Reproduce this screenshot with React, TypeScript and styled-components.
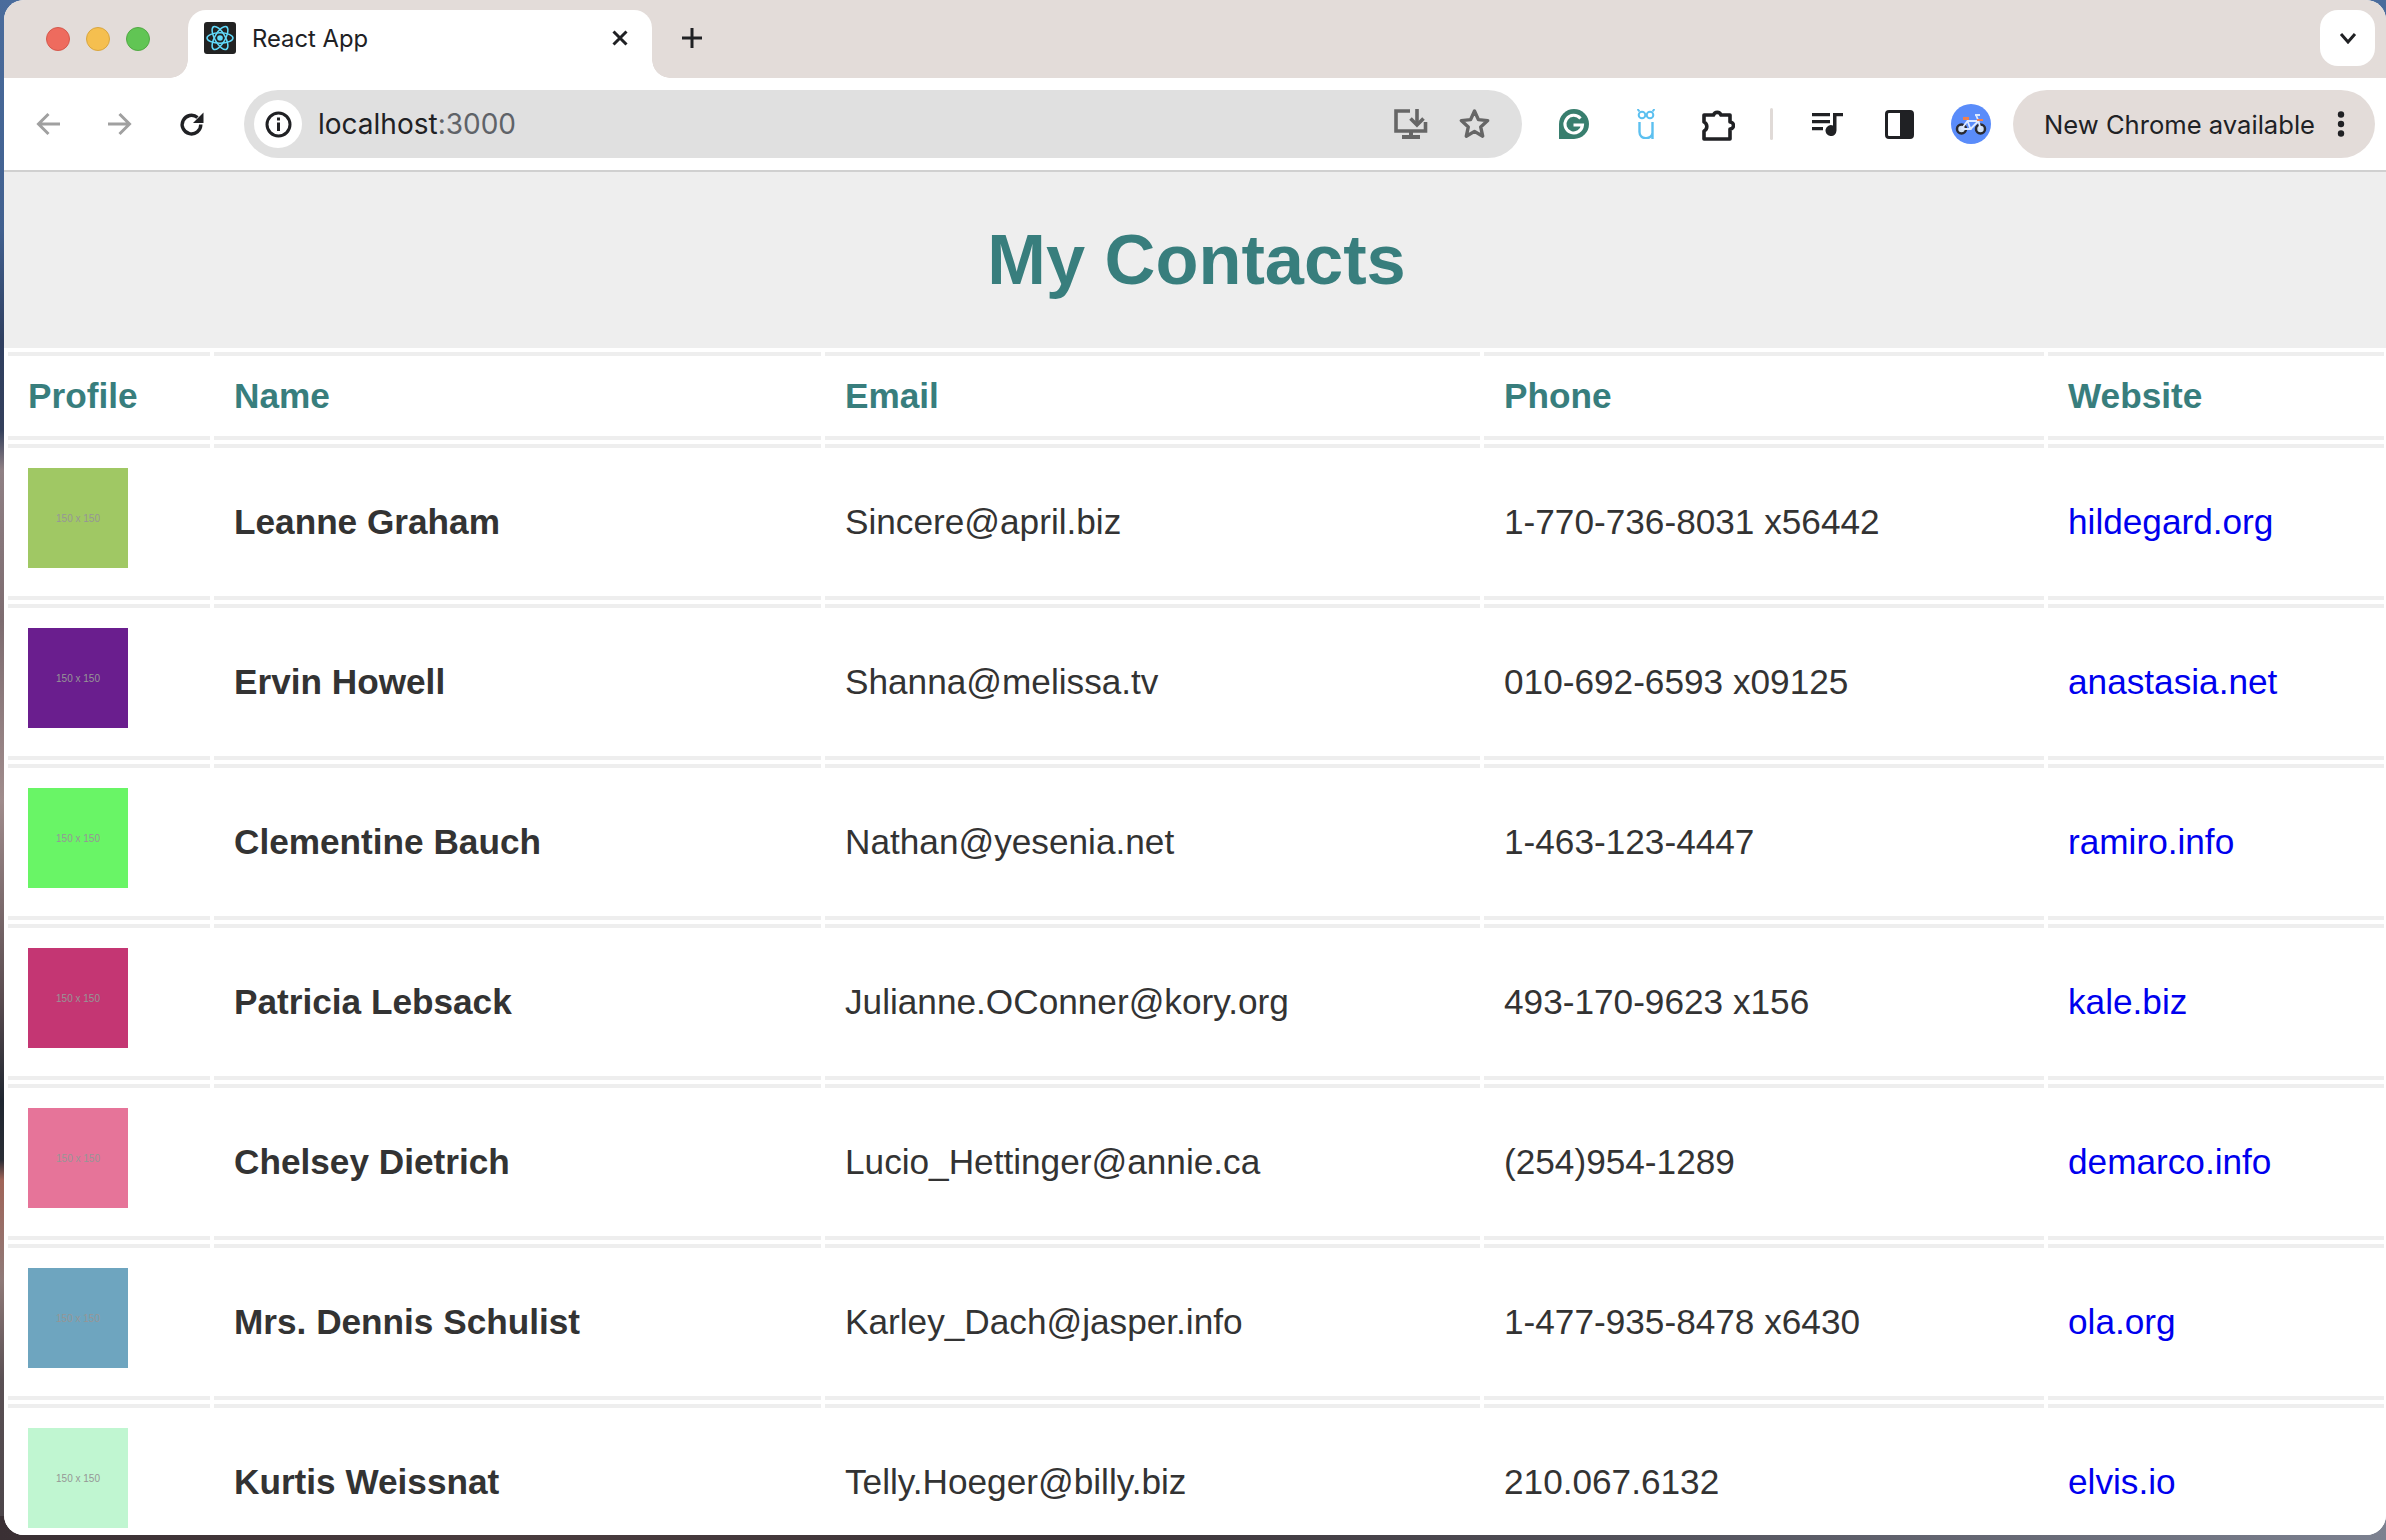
import React from "react";
import styled, { createGlobalStyle } from "styled-components";

const Global = createGlobalStyle`
  html, body { margin: 0; padding: 0; width: 2386px; height: 1540px; overflow: hidden; background: #3c4250; }
`;

const Desktop = styled.div`
  width: 2386px;
  height: 1540px;
  padding: 0 0 5px 4px;
  box-sizing: border-box;
  overflow: hidden;
  background:
    linear-gradient(90deg, #3a3034 0, #4a3c3e 500px, #3c3438 1100px, #55555f 1700px, #7c8190 2386px) bottom / 100% 24px no-repeat,
    linear-gradient(180deg, #4a6c9c 0, #41608f 230px, #2f3f60 340px, #34405c 430px, #8f8084 470px, #7d6c70 620px, #a08c8c 800px, #5a4c50 1000px, #1f2630 1100px, #2a2d35 1160px, #a06458 1180px, #8f7a78 1280px, #5a5054 1380px, #4a4448 1540px);
`;

const Window = styled.div`
  width: 100%;
  height: 100%;
  display: flex;
  flex-direction: column;
  background: #fff;
  border-radius: 20px;
  overflow: hidden;
`;

const TabStrip = styled.div`
  height: 78px;
  flex: none;
  display: flex;
  background: #e3dcd9;
  padding: 10px 11px 0 42px;
  box-sizing: border-box;
`;

const Lights = styled.div`
  display: flex;
  align-items: center;
  gap: 16px;
  height: 58px;
  margin-right: 38px;
`;

const Light = styled.span<{ $c: string; $b: string }>`
  width: 24px;
  height: 24px;
  border-radius: 50%;
  box-sizing: border-box;
  background: ${(p) => p.$c};
  border: 1px solid ${(p) => p.$b};
`;

const Tab = styled.div`
  position: relative;
  width: 464px;
  height: 68px;
  flex: none;
  padding: 0 24px 12px 16px;
  display: flex;
  align-items: center;
  gap: 16px;
  box-sizing: border-box;
  background: #fff;
  border-radius: 18px 18px 0 0;
  font: 400 23.8px Inter, sans-serif;
  color: #202124;
  &::before, &::after {
    content: "";
    position: absolute;
    bottom: 0;
    width: 18px;
    height: 18px;
  }
  &::before { left: -18px; background: radial-gradient(circle at 0 0, transparent 17.5px, #fff 18px); }
  &::after { right: -18px; background: radial-gradient(circle at 100% 0, transparent 17.5px, #fff 18px); }
`;

const TabTitle = styled.span`
  flex: 1;
`;

const PlusButton = styled.div`
  margin: 18px 0 0 30px;
  width: 20px;
  height: 20px;
  display: flex;
  color: #202124;
`;

const StripSpacer = styled.div`
  flex: 1;
`;

const ChevronButton = styled.div`
  width: 55px;
  height: 56px;
  background: #fff;
  border-radius: 18px;
  display: flex;
  align-items: center;
  justify-content: center;
  color: #202124;
`;

const Toolbar = styled.div`
  height: 94px;
  flex: none;
  display: flex;
  align-items: center;
  box-sizing: border-box;
  padding: 0 11px 0 0;
  background: #fff;
  border-bottom: 2px solid #d0d0d0;
`;

const NavButtons = styled.div`
  display: flex;
  align-items: center;
  gap: 46px;
  padding-left: 31px;
  margin-right: 39px;
`;

const NavIcon = styled.div<{ $on?: boolean }>`
  width: 26px;
  height: 26px;
  display: flex;
  color: ${(p) => (p.$on ? "#202124" : "#a0a0a0")};
`;

const Omnibox = styled.div`
  width: 1278px;
  height: 68px;
  flex: none;
  display: flex;
  align-items: center;
  box-sizing: border-box;
  padding: 0 31px 0 10px;
  background: #e0e0e0;
  border-radius: 34px;
  font: 400 28px Inter, sans-serif;
  color: #202124;
`;

const InfoChip = styled.div`
  width: 48px;
  height: 48px;
  border-radius: 50%;
  background: #fff;
  display: flex;
  align-items: center;
  justify-content: center;
  margin-right: 16px;
`;

const Port = styled.span`
  color: #5f6368;
`;

const Url = styled.div`
  flex: 1;
  white-space: nowrap;
`;

const OmniIcons = styled.div`
  display: flex;
  align-items: center;
  gap: 30px;
  color: #666;
`;

const Extensions = styled.div`
  display: flex;
  align-items: center;
  margin-left: 16px;
`;

const Ext = styled.div`
  width: 72px;
  height: 40px;
  display: flex;
  align-items: center;
  justify-content: center;
`;

const Separator = styled.div`
  width: 3px;
  height: 32px;
  background: #e0dad7;
  border-radius: 2px;
  margin: 0 18px 0 16px;
`;

const UpdatePill = styled.div`
  margin-left: 6px;
  width: 362px;
  height: 68px;
  box-sizing: border-box;
  display: flex;
  align-items: center;
  justify-content: space-between;
  padding: 0 30px 0 31px;
  background: #e3dcd9;
  border-radius: 34px;
  font: 400 25.6px Inter, sans-serif;
  color: #202124;
`;

const Page = styled.div`
  flex: 1;
  min-height: 0;
  overflow: hidden;
  background: #fff;
  font-family: "Liberation Sans", Arial, sans-serif;
`;

const Header = styled.header`
  height: 176px;
  box-sizing: border-box;
  padding: 0 0 2px 3px;
  background: #eee;
  display: flex;
  align-items: center;
  justify-content: center;
`;

const Title = styled.h1`
  margin: 0;
  font-size: 70.4px;
  font-weight: 700;
  color: #387e7d;
`;

const Table = styled.table`
  width: 2384px;
  table-layout: fixed;
  border-collapse: separate;
  border-spacing: 4px;
`;

const Th = styled.th`
  height: 80px;
  padding: 0 20px;
  text-align: left;
  font-size: 35.2px;
  font-weight: 700;
  color: #387e7d;
  border-top: 4px solid #eee;
  border-bottom: 4px solid #eee;
`;

const Td = styled.td`
  padding: 20px;
  height: 156px;
  box-sizing: border-box;
  font-size: 35.2px;
  color: #333;
  border-top: 4px solid #eee;
  border-bottom: 4px solid #eee;
  vertical-align: middle;
`;

const NameCell = styled(Td)`
  font-weight: 700;
`;

const PhotoCell = styled(Td)`
  vertical-align: top;
`;

const Photo = styled.div<{ $bg: string }>`
  width: 100px;
  height: 100px;
  display: flex;
  align-items: center;
  justify-content: center;
  background: ${(p) => p.$bg};
  color: #969696;
  font-size: 10px;
`;

const Site = styled.a`
  color: #0000ee;
  text-decoration: none;
`;

const contacts = [
  { name: "Leanne Graham", email: "Sincere@april.biz", phone: "1-770-736-8031 x56442", site: "hildegard.org", bg: "#a0c864" },
  { name: "Ervin Howell", email: "Shanna@melissa.tv", phone: "010-692-6593 x09125", site: "anastasia.net", bg: "#6a1e8e" },
  { name: "Clementine Bauch", email: "Nathan@yesenia.net", phone: "1-463-123-4447", site: "ramiro.info", bg: "#69f566" },
  { name: "Patricia Lebsack", email: "Julianne.OConner@kory.org", phone: "493-170-9623 x156", site: "kale.biz", bg: "#c43673" },
  { name: "Chelsey Dietrich", email: "Lucio_Hettinger@annie.ca", phone: "(254)954-1289", site: "demarco.info", bg: "#e67499" },
  { name: "Mrs. Dennis Schulist", email: "Karley_Dach@jasper.info", phone: "1-477-935-8478 x6430", site: "ola.org", bg: "#6ea5bf" },
  { name: "Kurtis Weissnat", email: "Telly.Hoeger@billy.biz", phone: "210.067.6132", site: "elvis.io", bg: "#c0f6d1" },
];

const ReactLogo = () => (
  <svg width="32" height="32" viewBox="0 0 32 32">
    <rect width="32" height="32" rx="3" fill="#222" />
    <g fill="none" stroke="#61dafb" strokeWidth="1.5">
      <ellipse cx="16" cy="16" rx="13" ry="5.2" />
      <ellipse cx="16" cy="16" rx="13" ry="5.2" transform="rotate(60 16 16)" />
      <ellipse cx="16" cy="16" rx="13" ry="5.2" transform="rotate(120 16 16)" />
    </g>
    <circle cx="16" cy="16" r="2.8" fill="#61dafb" />
  </svg>
);

const Glyph = ({ children, size = 24, vb = 24, sw = 2.4 }: { children: React.ReactNode; size?: number; vb?: number; sw?: number }) => (
  <svg width={size} height={size} viewBox={`0 0 ${vb} ${vb}`} fill="none" stroke="currentColor" strokeWidth={sw}>
    {children}
  </svg>
);

export default function App() {
  return (
    <Desktop>
      <Global />
      <Window>
        <TabStrip>
          <Lights>
            <Light $c="#ee6b5e" $b="#d5584c" />
            <Light $c="#f5bf4f" $b="#d9a63f" />
            <Light $c="#61c554" $b="#52a944" />
          </Lights>
          <Tab>
            <ReactLogo />
            <TabTitle>React App</TabTitle>
            <Glyph size={16} vb={16} sw={3}><path d="M1.5 1.5l13 13M14.5 1.5l-13 13" /></Glyph>
          </Tab>
          <PlusButton>
            <Glyph size={20} vb={20} sw={3}><path d="M10 0v20M0 10h20" /></Glyph>
          </PlusButton>
          <StripSpacer />
          <ChevronButton>
            <Glyph size={18} vb={18} sw={3}><path d="M2 5l7 8 7-8" /></Glyph>
          </ChevronButton>
        </TabStrip>
        <Toolbar>
          <NavButtons>
            <NavIcon>
              <Glyph size={26} vb={26} sw={3}><path d="M25 13H4M13.5 3L3.5 13l10 10" /></Glyph>
            </NavIcon>
            <NavIcon>
              <Glyph size={26} vb={26} sw={3}><path d="M1 13h21M12.5 3l10 10-10 10" /></Glyph>
            </NavIcon>
            <NavIcon $on>
              <Glyph size={26} vb={26} sw={3.4}>
                <path d="M21.8 13.5A9.3 9.3 0 1 1 18.5 6.5" />
                <path d="M24.5 1.5v10.500H14z" fill="currentColor" stroke="none" />
              </Glyph>
            </NavIcon>
          </NavButtons>
          <Omnibox>
            <InfoChip>
              <svg width="27" height="27" viewBox="0 0 27 27" fill="none" stroke="#202124" strokeWidth="3">
                <circle cx="13.5" cy="13.5" r="11.5" />
                <path d="M13.5 11.5v8.500M13.5 6.5v3" />
              </svg>
            </InfoChip>
            <Url>localhost<Port>:3000</Port></Url>
            <OmniIcons>
              <svg width="34" height="30" viewBox="0 0 34 30" fill="none" stroke="currentColor" strokeWidth="3.6">
                <path d="M16 2H2v20h29.5v-9" />
                <path d="M23 0v14" />
                <path d="M16.5 9.5L23 16l6.5-6.5" />
                <path d="M8 28h18M17 22v6" strokeWidth="4" />
              </svg>
              <svg width="33" height="32" viewBox="0 0 33 32" fill="none" stroke="currentColor" strokeWidth="3.4" strokeLinejoin="round">
                <path d="M16.5 3l3.9 8.6 9.3 1-7 6.3 2 9.3-8.2-4.800-8.2 4.800 2-9.300-7-6.300 9.300-1z" />
              </svg>
            </OmniIcons>
          </Omnibox>
          <Extensions>
            <Ext>
              <svg width="30" height="30" viewBox="0 0 30 30">
                <path d="M0 30V15A15 15 0 1 1 15 30z" fill="#387e6e" />
                <path d="M21.5 9.5A8.8 8.8 0 1 0 23.5 16H14.5" fill="none" stroke="#fff" strokeWidth="3" />
              </svg>
            </Ext>
            <Ext>
              <svg width="18" height="30" viewBox="0 0 18 30" fill="none" stroke="#5cc0f0" strokeWidth="2">
                <circle cx="5" cy="6" r="3.3" />
                <circle cx="13" cy="6" r="3.3" />
                <path d="M0.5 0l2 2.5M17.5 0l-2 2.5" />
                <path d="M2.5 13v10c0 8 12 8 13 1V13M15.5 24v6" strokeWidth="2.4" />
              </svg>
            </Ext>
            <Ext>
              <svg width="34" height="34" viewBox="-1 0 34 34" fill="none" stroke="#202124" strokeWidth="3.6" strokeLinejoin="round">
                <path d="M2 8h9.5a4 4 0 0 1 7.5 0h9v7a3.5 3.5 0 0 1 0 7v10H2v-8a5 5 0 0 0 0-9z" />
              </svg>
            </Ext>
            <Separator />
            <Ext>
              <svg width="31" height="23" viewBox="0 0 31 23" fill="#202124">
                <path d="M0 0h18v3.3H0zM0 7h18v3.3H0zM0 14h11v3.3H0zM21 0h10v3.3h-6.5V17.5a5.5 5.5 0 1 1-3.5-5.1z" />
              </svg>
            </Ext>
            <Ext>
              <svg width="29" height="29" viewBox="0 0 29 29">
                <rect x="1.5" y="1.5" width="26" height="26" rx="2.5" fill="#fff" stroke="#202124" strokeWidth="3" />
                <rect x="15" y="1.5" width="12.5" height="26" fill="#202124" />
              </svg>
            </Ext>
            <Ext>
              <svg width="40" height="40" viewBox="0 0 40 40">
                <circle cx="20" cy="20" r="20" fill="#5a8cfa" />
                <circle cx="10.5" cy="25" r="4.5" fill="#cfe0f5" stroke="#2a2a30" strokeWidth="2.5" />
                <circle cx="29.5" cy="25" r="4.5" fill="#cfe0f5" stroke="#2a2a30" strokeWidth="2.5" />
                <path d="M10.5 25l6-8h11l2 8M16.5 17l3 8h-9M19.5 25l8-8" fill="none" stroke="#dce9ff" strokeWidth="1.8" />
                <path d="M25 11l2.5 6M24 11h5" fill="none" stroke="#dce9ff" strokeWidth="1.8" />
                <rect x="12" y="13" width="6" height="3" fill="#f08050" />
                <rect x="26" y="15" width="6" height="2" fill="#f08050" />
              </svg>
            </Ext>
          </Extensions>
          <UpdatePill>
            New Chrome available
            <svg width="8" height="26" viewBox="0 0 8 26" fill="#202124">
              <circle cx="4" cy="3.5" r="3.2" />
              <circle cx="4" cy="13" r="3.2" />
              <circle cx="4" cy="22.5" r="3.2" />
            </svg>
          </UpdatePill>
        </Toolbar>
        <Page>
          <Header>
            <Title>My Contacts</Title>
          </Header>
          <Table>
            <colgroup>
              <col style={{ width: 202 }} />
              <col style={{ width: 607 }} />
              <col style={{ width: 655 }} />
              <col style={{ width: 560 }} />
              <col />
            </colgroup>
            <thead>
              <tr>
                <Th>Profile</Th>
                <Th>Name</Th>
                <Th>Email</Th>
                <Th>Phone</Th>
                <Th>Website</Th>
              </tr>
            </thead>
            <tbody>
              {contacts.map((c) => (
                <tr key={c.name}>
                  <PhotoCell>
                    <Photo $bg={c.bg}>150 x 150</Photo>
                  </PhotoCell>
                  <NameCell>{c.name}</NameCell>
                  <Td>{c.email}</Td>
                  <Td>{c.phone}</Td>
                  <Td>
                    <Site href="#">{c.site}</Site>
                  </Td>
                </tr>
              ))}
            </tbody>
          </Table>
        </Page>
      </Window>
    </Desktop>
  );
}
